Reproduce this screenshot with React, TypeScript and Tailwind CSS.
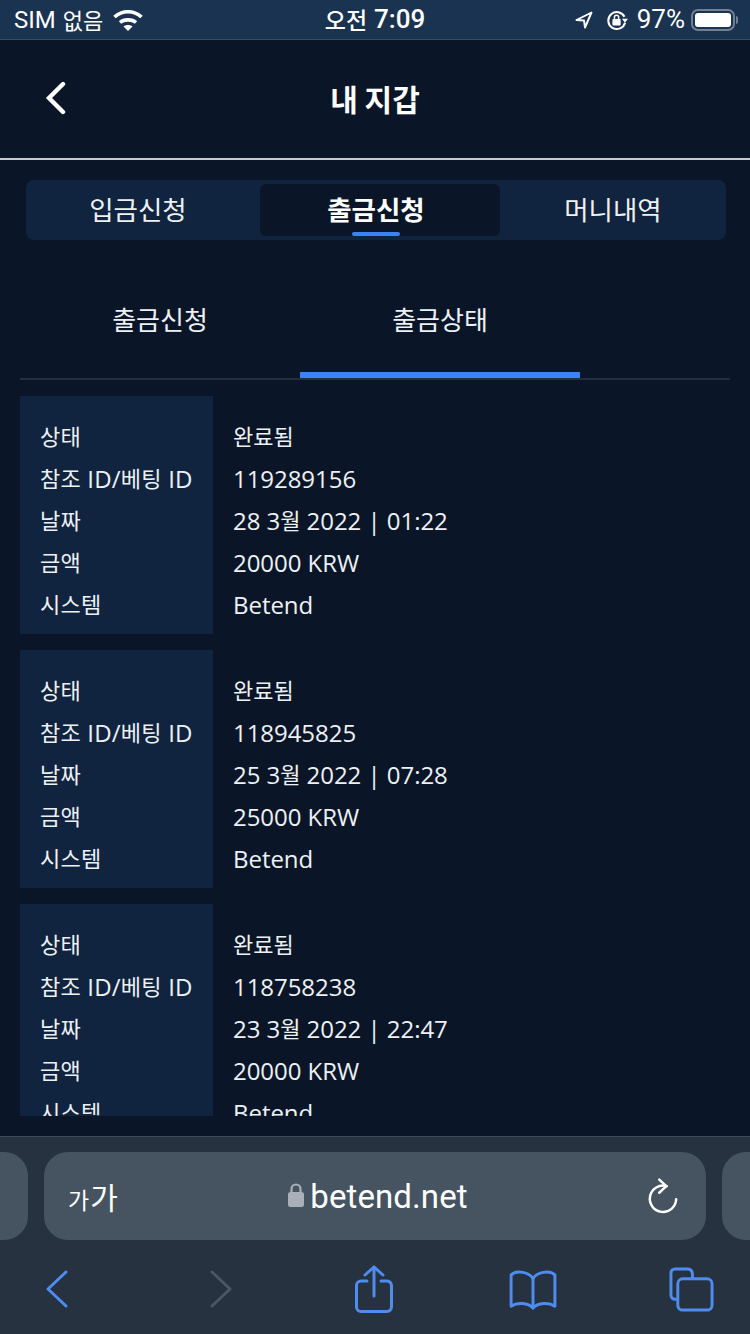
import React from 'react'

const records = [
  { id: '119289156', day: '28', time: '01:22', amount: '20000' },
  { id: '118945825', day: '25', time: '07:28', amount: '25000' },
  { id: '118758238', day: '23', time: '22:47', amount: '20000' },
]

const sans = "font-['Open_Sans','Noto_Sans_CJK_KR',sans-serif]"
const kr = "font-['Noto_Sans_CJK_KR',sans-serif]"

// Hangul runs sit a little smaller and higher than the latin text around them
const K = ({ children }: { children: React.ReactNode }) => (
  <span className={`${kr} align-[1px] text-[22px] leading-none`}>{children}</span>
)

const Row = ({ label, value }: { label: React.ReactNode; value: React.ReactNode }) => (
  <div className="flex h-[42px] items-center">
    <div className="flex h-full w-[193px] items-center bg-[#10243f] pl-5">
      <div className="tracking-[0.2px]">{label}</div>
    </div>
    <div className="pl-5">{value}</div>
  </div>
)

const Card = ({ id, day, time, amount }: (typeof records)[number]) => (
  <div className={`flex flex-col text-[24px] leading-[42px] tracking-[-0.05px] text-[#eef1f4] ${sans}`}>
    <div className="h-5 w-[193px] bg-[#10243f]" />
    <Row label={<K>상태</K>} value={<K>완료됨</K>} />
    <Row
      label={
        <>
          <K>참조</K> ID/<K>베팅</K> ID
        </>
      }
      value={id}
    />
    <Row
      label={<K>날짜</K>}
      value={
        <>
          {day} 3<K>월</K> 2022 | {time}
        </>
      }
    />
    <Row label={<K>금액</K>} value={`${amount} KRW`} />
    <Row label={<K>시스템</K>} value="Betend" />
    <div className="h-2 w-[193px] bg-[#10243f]" />
  </div>
)

const StatusBar = () => (
  <div className="flex h-10 shrink-0 items-center justify-between border-b border-[#3a4c60] bg-[#1a3350] pl-[14px] pr-[12px] font-['Roboto','Noto_Sans_CJK_KR',sans-serif] text-[24px] text-white">
    <div className="flex w-[200px] items-center gap-[10px]">
      <span className="flex items-center gap-[7px]">
        SIM <span className={`${kr} text-[22px]`}>없음</span>
      </span>
      <svg width="30" height="24" viewBox="0 0 30 24" fill="none" stroke="white" strokeWidth="3.6">
        <path d="M1.5 9C9 2 21 2 28.5 9" />
        <path d="M7 14.5C11 11 19 11 23 14.5" />
        <path d="M15 23L10.5 18.5C13 16.5 17 16.5 19.5 18.5Z" fill="white" stroke="none" />
      </svg>
    </div>
    <div className="mr-[2px] flex items-center gap-[7px] text-[26px] font-medium">
      <span className={`${kr} text-[23px]`}>오전</span> 7:09
    </div>
    <div className="flex w-[200px] items-center justify-end text-[26px]">
      <svg width="18" height="18" viewBox="0 0 18 18" fill="none" stroke="white" strokeWidth="1.9" strokeLinejoin="round">
        <path d="M16.5 1.5L1.5 9L9 9.5L10 16.5Z" />
      </svg>
      <svg className="ml-[13px]" width="22" height="22" viewBox="0 0 24 24" fill="none" stroke="white" strokeWidth="2.2">
        <path d="M20.2 8.5A9.3 9.3 0 1 0 20.8 15" />
        <path d="M17.4 10.5H24L20.7 15Z" fill="white" stroke="none" />
        <rect x="7" y="11" width="9" height="7" rx="1" fill="white" stroke="none" />
        <path d="M9.2 11V9A2.3 2.3 0 0 1 13.8 9V11" strokeWidth="1.6" />
      </svg>
      <span className="ml-[9px]">97%</span>
      <div className="ml-[6px] flex items-center">
        <div className="flex h-[22px] w-[44px] items-center rounded-[7px] border-2 border-[#6f8093] p-[2px]">
          <div className="h-full w-full rounded-[3px] bg-white" />
        </div>
        <div className="ml-[1px] h-2 w-[2px] rounded-r bg-[#6f8093]" />
      </div>
    </div>
  </div>
)

const Header = () => (
  <div className="relative flex h-[120px] shrink-0 items-center justify-center border-b-2 border-[#c9cbcd] pb-[2px]">
    <svg className="absolute left-[44px] top-[41px]" width="24" height="34" viewBox="0 0 24 34" fill="none" stroke="white" strokeWidth="4.4" strokeLinecap="round" strokeLinejoin="miter">
      <path d="M19 3L5 17L19 31" />
    </svg>
    <h1 className={`${kr} text-[30px] font-bold text-white`}>내 지갑</h1>
  </div>
)

const MainTabs = () => (
  <div className={`ml-[26px] mr-[24px] mt-5 flex h-[60px] shrink-0 items-center rounded-lg bg-[#10243f] pl-[4px] text-[26.5px] text-[#eef1f4] ${kr}`}>
    <div className="mr-[14px] flex w-[216px] justify-center pb-[2px]">입금신청</div>
    <div className="relative flex h-[52px] w-[240px] items-center justify-center rounded-md bg-[#0a1628] pb-[2px] pr-[8px] font-bold text-white">
      출금신청
      <div className="absolute bottom-0 left-[92px] h-1 w-12 rounded-sm bg-[#3b82f6]" />
    </div>
    <div className="flex flex-1 justify-center pb-[2px]">머니내역</div>
  </div>
)

const SubTabs = () => (
  <div className={`mx-5 mt-[20px] flex h-[120px] shrink-0 border-b-2 border-[#242f3d] text-[26px] text-[#eef1f4] ${kr}`}>
    <div className="flex h-[116px] w-[280px] items-center justify-center">출금신청</div>
    <div className="flex h-[118px] w-[280px] items-center justify-center border-b-[6px] border-[#3b82f6] pt-[4px]">출금상태</div>
  </div>
)

const SafariBar = () => (
  <div className="h-[198px] shrink-0 border-t border-[#3d4a57] bg-[#26323f]">
    <div className="mt-[15px] flex h-[88px] items-center gap-4">
      <div className="h-full w-[28px] rounded-r-[24px] bg-[#465360]" />
      <div className="relative flex h-full flex-1 items-center justify-center rounded-[24px] bg-[#465360]">
        <span className={`absolute left-6 flex items-baseline gap-[1px] text-white ${kr}`}>
          <span className="text-[23px]">가</span>
          <span className="text-[30px]">가</span>
        </span>
        <span className="ml-[6px] flex items-center gap-[6px] pt-[2px] font-['Roboto',sans-serif] text-[33px] tracking-[0.1px] text-white">
          <svg className="-mt-[2px]" width="16" height="26" viewBox="0 0 16 26" fill="none">
            <rect x="0" y="9" width="16" height="15" rx="2.5" fill="#a9b0ba" />
            <path d="M3.5 10V6A4.5 4.5 0 0 1 12.5 6V10" stroke="#a9b0ba" strokeWidth="2.2" />
          </svg>
          betend.net
        </span>
        <svg className="absolute right-[27px]" width="32" height="37" viewBox="0 0 34 38" fill="none" stroke="white" strokeWidth="2.6" strokeLinecap="round" strokeLinejoin="round">
          <path d="M21 8A14 14 0 1 0 31 22" />
          <path d="M13 1L20.5 8L13 15" />
        </svg>
      </div>
      <div className="h-full w-[28px] rounded-l-[24px] bg-[#465360]" />
    </div>
    <div className="mt-[24px] flex h-[50px] w-[750px] items-center pl-[45px]">
      <svg width="24" height="38" viewBox="0 0 24 38" fill="none" stroke="#4f8cf0" strokeWidth="3" strokeLinecap="round" strokeLinejoin="round">
        <path d="M21 2L3 19L21 36" />
      </svg>
      <svg className="ml-[140px]" width="24" height="38" viewBox="0 0 24 38" fill="none" stroke="#4c5660" strokeWidth="3" strokeLinecap="round" strokeLinejoin="round">
        <path d="M3 2L21 19L3 36" />
      </svg>
      <svg className="ml-[122px]" width="38" height="48" viewBox="0 0 38 48" fill="none" stroke="#4f8cf0" strokeWidth="3" strokeLinecap="round" strokeLinejoin="round">
        <path d="M12 16H6A4.5 4.5 0 0 0 1.5 20.5V42A4.5 4.5 0 0 0 6 46.5H32A4.5 4.5 0 0 0 36.5 42V20.5A4.5 4.5 0 0 0 32 16H26" />
        <path d="M19 31V2" />
        <path d="M10 10L19 2L28 10" />
      </svg>
      <svg className="ml-[116px] mt-[2px]" width="48" height="40" viewBox="0 0 50 42" fill="none" stroke="#4f8cf0" strokeWidth="3.1" strokeLinecap="round" strokeLinejoin="round">
        <path d="M25 9C21 2 8 0 2 5V38C8 34 20 34 25 40C30 34 42 34 48 38V5C42 0 29 2 25 9Z" />
        <path d="M25 9V40" />
      </svg>
      <svg className="ml-[112px]" width="45" height="45" viewBox="0 0 46 46" fill="none" stroke="#4f8cf0" strokeWidth="3" strokeLinejoin="round">
        <path d="M8 33H6A4 4 0 0 1 2 29V6A4 4 0 0 1 6 2H19C22 2 24 4 24 8V12" />
        <rect x="9" y="12" width="35" height="32" rx="5" />
      </svg>
    </div>
  </div>
)

export default function App() {
  return (
    <div className="flex h-[1334px] w-[750px] flex-col overflow-hidden bg-[#0a1628]">
      <StatusBar />
      <Header />
      <MainTabs />
      <SubTabs />
      <div className="mx-5 mb-5 mt-4 flex flex-1 flex-col gap-4 overflow-hidden">
        {records.map((r) => (
          <Card key={r.id} {...r} />
        ))}
      </div>
      <SafariBar />
    </div>
  )
}
